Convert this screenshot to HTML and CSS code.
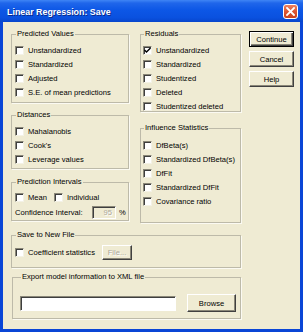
FILE: index.html
```html
<!DOCTYPE html>
<html>
<head>
<meta charset="utf-8">
<link rel="stylesheet" href="styles.css">
</head>
<body>
<div class="window">
  <div class="titlebar">
    <span class="title">Linear Regression: Save</span>
    <span class="close"><svg width="9" height="9" viewBox="0 0 9 9"><path d="M1 1L8 8M8 1L1 8" stroke="#fff" stroke-width="1.8" stroke-linecap="square"/></svg></span>
  </div>
  <div class="client">
    <div class="top">
      <div class="col col-left">
        <fieldset class="group g-pv">
          <legend>Predicted Values</legend>
          <div class="row"><span class="cb"></span>Unstandardized</div>
          <div class="row"><span class="cb"></span>Standardized</div>
          <div class="row"><span class="cb"></span>Adjusted</div>
          <div class="row"><span class="cb"></span>S.E. of mean predictions</div>
        </fieldset>
        <fieldset class="group g-dist">
          <legend>Distances</legend>
          <div class="row"><span class="cb"></span>Mahalanobis</div>
          <div class="row"><span class="cb"></span>Cook's</div>
          <div class="row"><span class="cb"></span>Leverage values</div>
        </fieldset>
        <fieldset class="group g-pi">
          <legend>Prediction Intervals</legend>
          <div class="row"><span class="cb"></span>Mean<span class="cb cb-gap"></span>Individual</div>
          <div class="row row-ci"><span class="ci-label">Confidence Interval:</span><span class="field field-disabled">95</span><span class="pct">%</span></div>
        </fieldset>
      </div>
      <div class="col col-right">
        <fieldset class="group g-res">
          <legend>Residuals</legend>
          <div class="row"><span class="cb cb-checked"><svg width="7" height="7" viewBox="0 0 7 7"><path d="M0.5 3L2.5 5L6.5 1" fill="none" stroke="#000" stroke-width="1.4"/></svg></span>Unstandardized</div>
          <div class="row"><span class="cb"></span>Standardized</div>
          <div class="row"><span class="cb"></span>Studentized</div>
          <div class="row"><span class="cb"></span>Deleted</div>
          <div class="row"><span class="cb"></span>Studentized deleted</div>
        </fieldset>
        <fieldset class="group g-inf">
          <legend>Influence Statistics</legend>
          <div class="row"><span class="cb"></span>DfBeta(s)</div>
          <div class="row"><span class="cb"></span>Standardized DfBeta(s)</div>
          <div class="row"><span class="cb"></span>DfFit</div>
          <div class="row"><span class="cb"></span>Standardized DfFit</div>
          <div class="row"><span class="cb"></span>Covariance ratio</div>
        </fieldset>
      </div>
      <div class="buttons">
        <span class="btn btn-default">Continue</span>
        <span class="btn">Cancel</span>
        <span class="btn">Help</span>
      </div>
    </div>
    <fieldset class="group g-save">
      <legend>Save to New File</legend>
      <div class="row row-save"><span class="cb"></span>Coefficient statistics<span class="btn btn-disabled btn-file">File...</span></div>
    </fieldset>
    <fieldset class="group g-xml">
      <legend>Export model information to XML file</legend>
      <div class="row row-xml"><span class="field field-xml"></span><span class="btn btn-browse">Browse</span></div>
    </fieldset>
  </div>
</div>
</body>
</html>
```
FILE: styles.css
```css
html, body {
  margin: 0;
  padding: 0;
  background: #ffffff;
}

.window {
  width: 303px;
  height: 332px;
  display: flex;
  flex-direction: column;
  font-family: "Liberation Sans", Arial, sans-serif;
  font-size: 7.6px;
  color: #000;
}

.titlebar {
  height: 22px;
  flex: none;
  display: flex;
  align-items: center;
  padding: 0 5px 0 7px;
  box-sizing: border-box;
  background: linear-gradient(180deg, #3f85f5 0%, #1f66ea 14%, #0d57e6 45%, #0a51df 80%, #0846cc 100%);
}

.title {
  color: #fff;
  font-weight: bold;
  font-size: 8.9px;
  padding-top: 2px;
  text-shadow: 1px 1px 0 #0a2a8a;
}

.close {
  margin-left: auto;
  width: 15px;
  height: 15px;
  box-sizing: border-box;
  border: 1px solid #fff;
  border-radius: 3px;
  background: linear-gradient(180deg, #ec8060 0%, #dc5632 50%, #c8401c 100%);
  display: flex;
  align-items: center;
  justify-content: center;
}

.client {
  flex: 1;
  border: 3px solid #0a46d6;
  border-top: 0;
  background: #efebd3;
  padding: 7px 0 0 8px;
  display: flex;
  flex-direction: column;
  align-items: flex-start;
}

.top {
  display: flex;
  align-items: flex-start;
}

.col {
  display: flex;
  flex-direction: column;
}

.col-left { width: 118px; }
.col-right { width: 101px; margin-left: 11px; }

.group {
  margin: 0;
  box-sizing: border-box;
  border: 1px solid #bdbaa9;
  box-shadow: 1px 1px 0 #fbfaf2;
  min-width: 0;
  padding: 4px 0 0 3px;
}

.group legend {
  line-height: 10px;
  padding: 0 1px;
  margin-left: 1px;
}

.col-right .group { padding-left: 2px; }
.col-right .group legend { margin-left: 1px; }

.g-pv { height: 74px; }
.g-dist { height: 59px; margin-top: 7px; }
.g-pi { height: 44px; margin-top: 8px; padding-top: 3px; }
.g-res { height: 83px; }
.g-inf { height: 100px; margin-top: 11px; padding-top: 5px; }
.g-save { width: 230px; height: 38px; margin-top: 7px; }
.g-xml { width: 229px; height: 47px; margin-top: 4px; margin-left: 1px; padding: 12px 0 0 7px; }

.row {
  height: 14px;
  display: flex;
  align-items: center;
  white-space: nowrap;
}

.cb {
  width: 9px;
  height: 9px;
  flex: none;
  box-sizing: border-box;
  background: #fff;
  border-top: 1px solid #8a8778;
  border-left: 1px solid #8a8778;
  border-right: 1px solid #f4f2e6;
  border-bottom: 1px solid #f4f2e6;
  box-shadow: inset 1px 1px 0 #3e3e3e;
  margin-right: 4px;
  display: flex;
  align-items: center;
  justify-content: center;
}

.cb-gap { margin-left: 7px; }

.row-ci {
  margin-top: 1px;
}

.ci-label {
  width: 77px;
}

.field {
  box-sizing: border-box;
  border-top: 1px solid #8a8778;
  border-left: 1px solid #8a8778;
  border-right: 1px solid #fff;
  border-bottom: 1px solid #fff;
  box-shadow: inset 1px 1px 0 #3e3e3e;
}

.field-disabled {
  width: 24px;
  height: 13px;
  color: #aca899;
  text-shadow: 1px 1px 0 #fff;
  text-align: right;
  padding-right: 3px;
  line-height: 11px;
}

.pct {
  margin-left: 3px;
}

.field-xml {
  width: 156px;
  height: 15px;
  background: #fff;
}

.buttons {
  margin-left: 8px;
  margin-top: 2px;
  display: flex;
  flex-direction: column;
  gap: 4px;
}

.btn {
  width: 45px;
  height: 16px;
  box-sizing: border-box;
  display: flex;
  align-items: center;
  justify-content: center;
  border: 1px solid;
  border-color: #fff #404040 #404040 #fff;
  box-shadow: inset -1px -1px 0 #8a8778;
  background: #efebd3;
}

.btn-default {
  border: 1px solid #000;
  box-shadow: inset 1px 1px 0 #fff, inset -1px -1px 0 #404040, inset -2px -2px 0 #8a8778;
}

.row-save {
  height: 16px;
}

.btn-file {
  width: 30px;
  height: 15px;
  margin-left: 7px;
}

.btn-disabled {
  color: #aca899;
  text-shadow: 1px 1px 0 #fff;
}

.row-xml {
  height: 18px;
}

.btn-browse {
  width: 49px;
  height: 18px;
  margin-left: 11px;
}
```
